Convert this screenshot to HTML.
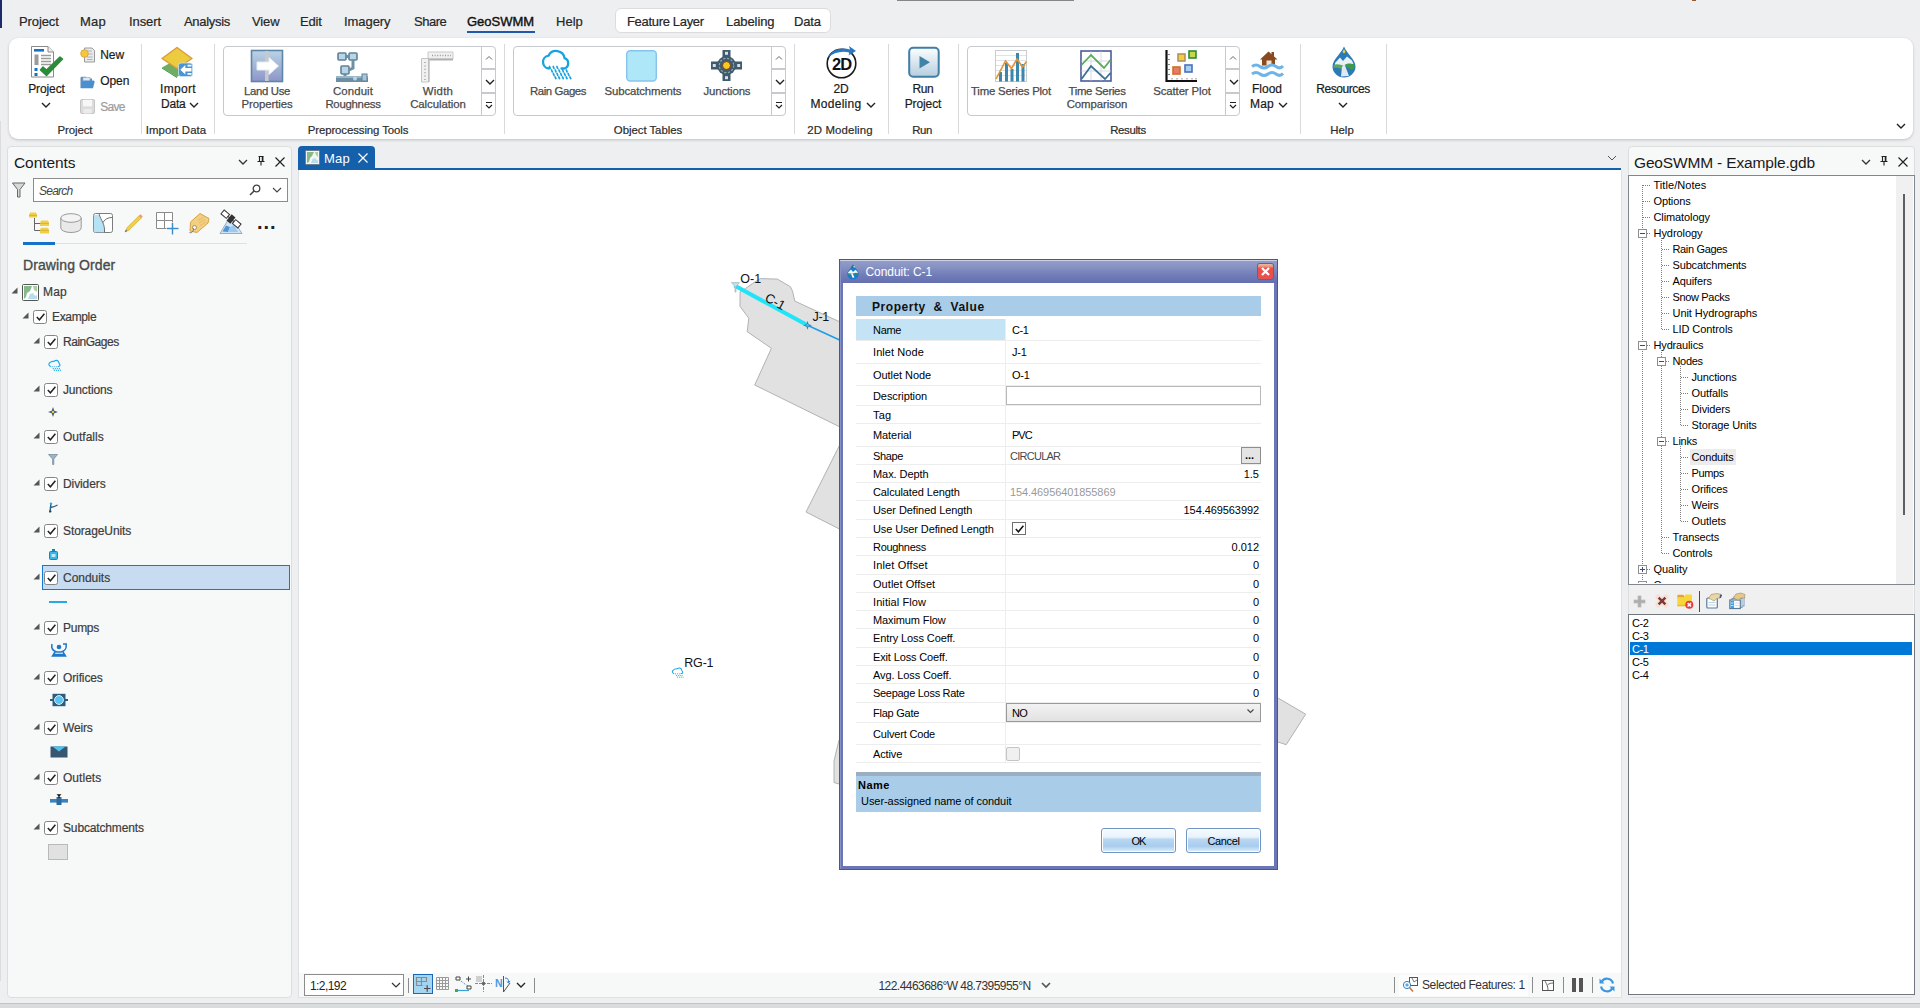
<!DOCTYPE html><html><head><meta charset="utf-8"><title>GeoSWMM</title><style>
*{box-sizing:border-box;margin:0;padding:0}
html,body{width:1920px;height:1008px;overflow:hidden;background:#eeeff1}
body{position:relative;font-family:"Liberation Sans",sans-serif;font-size:12px;color:#1a1a1a}
.a{position:absolute;white-space:nowrap}
.t{position:absolute;white-space:nowrap;line-height:1}
.c{transform:translateX(-50%);text-align:center}
.tab{color:#262626;-webkit-text-stroke:.2px}
.rb{color:#1a1a1a;-webkit-text-stroke:.2px}
.rg{color:#4a4a4a;-webkit-text-stroke:.25px}
.gl{color:#2b2b2b;-webkit-text-stroke:.2px}
.sep{position:absolute;width:1px;background:#d9d9d9;top:44px;height:90px}
.gal{position:absolute;border:1px solid #c6c9cd;border-radius:4px;background:#fff;top:46px;height:70px}
.tr{color:#3c3c3c;-webkit-text-stroke:.2px}
.tah{color:#000}
svg{position:absolute;overflow:visible}
</style></head><body>
<div class="a" style="left:0px;top:0px;width:2px;height:28px;background:#1f2a6b"></div>
<div class="a" style="left:0px;top:121px;width:1px;height:860px;background:#dcdcdc"></div>
<div class="a" style="left:1692px;top:0px;width:4px;height:1px;background:#9a5a30"></div>
<div class="a" style="left:0px;top:1003px;width:1920px;height:1px;background:#c2c3c5"></div>
<div class="a" style="left:0px;top:1004px;width:1920px;height:4px;background:#dadbdc"></div>
<div class="a" style="left:897px;top:0px;width:176.5px;height:1px;background:#868686"></div>
<div class="t tab" style="left:19px;top:14.5px;font-size:13px;letter-spacing:-0.1px;">Project</div>
<div class="t tab" style="left:80px;top:14.5px;font-size:13px;letter-spacing:0.21px;">Map</div>
<div class="t tab" style="left:129px;top:14.5px;font-size:13px;letter-spacing:-0.08px;">Insert</div>
<div class="t tab" style="left:184px;top:14.5px;font-size:13px;letter-spacing:-0.31px;">Analysis</div>
<div class="t tab" style="left:252px;top:14.5px;font-size:13px;letter-spacing:-0.13px;">View</div>
<div class="t tab" style="left:300px;top:14.5px;font-size:13px;letter-spacing:-0.15px;">Edit</div>
<div class="t tab" style="left:344px;top:14.5px;font-size:13px;letter-spacing:-0.06px;">Imagery</div>
<div class="t tab" style="left:414px;top:14.5px;font-size:13px;letter-spacing:-0.5px;">Share</div>
<div class="t tab" style="left:556px;top:14.5px;font-size:13px;letter-spacing:0.02px;">Help</div>
<div class="t tab" style="left:467px;top:14.5px;font-size:13px;color:#111;-webkit-text-stroke:.4px #111;letter-spacing:0px">GeoSWMM</div>
<div class="a" style="left:467px;top:31px;width:68px;height:2px;background:#1e5aa8"></div>
<div class="a" style="left:615px;top:8.4px;width:215.8px;height:25px;background:#fff;border:1px solid #dcdcdc;border-radius:6px"></div>
<div class="t tab" style="left:627px;top:14.5px;font-size:13px;letter-spacing:-0.32px;">Feature Layer</div>
<div class="t tab" style="left:726px;top:14.5px;font-size:13px;letter-spacing:-0.08px;">Labeling</div>
<div class="t tab" style="left:794px;top:14.5px;font-size:13px;letter-spacing:-0.18px;">Data</div>
<div class="a" style="left:8.6px;top:38.4px;width:1904.6px;height:100.8px;background:#fff;border-radius:9px;box-shadow:0 1px 3px rgba(0,0,0,.2)"></div>
<div class="sep" style="left:141px"></div>
<div class="sep" style="left:214px"></div>
<div class="sep" style="left:504px"></div>
<div class="sep" style="left:794px"></div>
<div class="sep" style="left:888px"></div>
<div class="sep" style="left:958px"></div>
<div class="sep" style="left:1300px"></div>
<div class="sep" style="left:1386px"></div>
<div class="t gl c" style="left:75px;top:124.5px;font-size:11.4px;letter-spacing:-0.08px;">Project</div>
<div class="t gl c" style="left:176px;top:124.5px;font-size:11.4px;letter-spacing:0.1px;">Import Data</div>
<div class="t gl c" style="left:358px;top:124.5px;font-size:11.4px;letter-spacing:-0.1px;">Preprocessing Tools</div>
<div class="t gl c" style="left:648px;top:124.5px;font-size:11.4px;letter-spacing:-0.04px;">Object Tables</div>
<div class="t gl c" style="left:840px;top:124.5px;font-size:11.4px;letter-spacing:0.14px;">2D Modeling</div>
<div class="t gl c" style="left:922px;top:124.5px;font-size:11.4px;letter-spacing:-0.39px;">Run</div>
<div class="t gl c" style="left:1128px;top:124.5px;font-size:11.4px;letter-spacing:-0.35px;">Results</div>
<div class="t gl c" style="left:1342px;top:124.5px;font-size:11.4px;letter-spacing:0.02px;">Help</div>
<div class="t rb c" style="left:46.5px;top:82.7px;font-size:12px;letter-spacing:-0.09px;">Project</div>
<svg style="left:41.5px;top:103px" width="8" height="5" viewBox="0 0 8 5"><path d="M0 0 L4 4 L8 0" fill="none" stroke="#222" stroke-width="1.4"/></svg>
<div class="t rb" style="left:100.2px;top:48.5px;font-size:12px;letter-spacing:-0.03px;">New</div>
<div class="t rb" style="left:100.2px;top:74.7px;font-size:12px;letter-spacing:-0.05px;">Open</div>
<div class="t rb" style="left:100.2px;top:100.5px;font-size:12px;letter-spacing:-0.71px;color:#9b9b9b">Save</div>
<div class="t rb c" style="left:178px;top:82.5px;font-size:12px;letter-spacing:0.31px;">Import</div>
<div class="t rb c" style="left:173.3px;top:97.5px;font-size:12px;letter-spacing:-0.17px;">Data</div>
<svg style="left:189.5px;top:103px" width="8" height="5" viewBox="0 0 8 5"><path d="M0 0 L4 4 L8 0" fill="none" stroke="#222" stroke-width="1.4"/></svg>
<div class="gal" style="left:223px;width:273px"></div>
<div class="a" style="left:481px;top:46px;width:1px;height:70px;background:#c6c9cd"></div>
<div class="a" style="left:481px;top:68px;width:15px;height:2px;background:#c6c9cd"></div>
<div class="a" style="left:481px;top:92px;width:15px;height:2px;background:#c6c9cd"></div>
<svg style="left:486px;top:56px" width="6" height="4" viewBox="0 0 6 4"><path d="M0 3.5 L3 .5 L6 3.5" fill="none" stroke="#666" stroke-width="1"/></svg>
<svg style="left:485.5px;top:79.5px" width="8" height="5" viewBox="0 0 8 5"><path d="M0 0 L4 4 L8 0" fill="none" stroke="#222" stroke-width="1.4"/></svg>
<svg style="left:486px;top:102px" width="6" height="7" viewBox="0 0 6 7"><path d="M0 .5 H6 M0 3 L3 6 L6 3" fill="none" stroke="#222" stroke-width="1.2"/></svg>
<div class="gal" style="left:513px;width:273px"></div>
<div class="a" style="left:771px;top:46px;width:1px;height:70px;background:#c6c9cd"></div>
<div class="a" style="left:771px;top:68px;width:15px;height:2px;background:#c6c9cd"></div>
<div class="a" style="left:771px;top:92px;width:15px;height:2px;background:#c6c9cd"></div>
<svg style="left:776px;top:56px" width="6" height="4" viewBox="0 0 6 4"><path d="M0 3.5 L3 .5 L6 3.5" fill="none" stroke="#666" stroke-width="1"/></svg>
<svg style="left:775.5px;top:79.5px" width="8" height="5" viewBox="0 0 8 5"><path d="M0 0 L4 4 L8 0" fill="none" stroke="#222" stroke-width="1.4"/></svg>
<svg style="left:776px;top:102px" width="6" height="7" viewBox="0 0 6 7"><path d="M0 .5 H6 M0 3 L3 6 L6 3" fill="none" stroke="#222" stroke-width="1.2"/></svg>
<div class="gal" style="left:967px;width:273px"></div>
<div class="a" style="left:1225px;top:46px;width:1px;height:70px;background:#c6c9cd"></div>
<div class="a" style="left:1225px;top:68px;width:15px;height:2px;background:#c6c9cd"></div>
<div class="a" style="left:1225px;top:92px;width:15px;height:2px;background:#c6c9cd"></div>
<svg style="left:1230px;top:56px" width="6" height="4" viewBox="0 0 6 4"><path d="M0 3.5 L3 .5 L6 3.5" fill="none" stroke="#666" stroke-width="1"/></svg>
<svg style="left:1229.5px;top:79.5px" width="8" height="5" viewBox="0 0 8 5"><path d="M0 0 L4 4 L8 0" fill="none" stroke="#222" stroke-width="1.4"/></svg>
<svg style="left:1230px;top:102px" width="6" height="7" viewBox="0 0 6 7"><path d="M0 .5 H6 M0 3 L3 6 L6 3" fill="none" stroke="#222" stroke-width="1.2"/></svg>
<div class="t rg c" style="left:267px;top:86.1px;font-size:11.4px;letter-spacing:-0.34px;">Land Use</div>
<div class="t rg c" style="left:267px;top:99.1px;font-size:11.4px;letter-spacing:-0.08px;">Properties</div>
<div class="t rg c" style="left:353px;top:86.1px;font-size:11.4px;letter-spacing:0.1px;">Conduit</div>
<div class="t rg c" style="left:353px;top:99.1px;font-size:11.4px;letter-spacing:-0.27px;">Roughness</div>
<div class="t rg c" style="left:438px;top:86.1px;font-size:11.4px;letter-spacing:0.26px;">Width</div>
<div class="t rg c" style="left:438px;top:99.1px;font-size:11.4px;letter-spacing:-0.06px;">Calculation</div>
<div class="t rg c" style="left:558px;top:86.1px;font-size:11.4px;letter-spacing:-0.41px;">Rain Gages</div>
<div class="t rg c" style="left:643px;top:86.1px;font-size:11.4px;letter-spacing:-0.13px;">Subcatchments</div>
<div class="t rg c" style="left:727px;top:86.1px;font-size:11.4px;letter-spacing:-0.14px;">Junctions</div>
<div class="t rg c" style="left:1011px;top:86.1px;font-size:11.4px;letter-spacing:-0.2px;">Time Series Plot</div>
<div class="t rg c" style="left:1097px;top:86.1px;font-size:11.4px;letter-spacing:-0.29px;">Time Series</div>
<div class="t rg c" style="left:1097px;top:99.1px;font-size:11.4px;letter-spacing:-0.07px;">Comparison</div>
<div class="t rg c" style="left:1182px;top:86.1px;font-size:11.4px;letter-spacing:-0.11px;">Scatter Plot</div>
<div class="t rb c" style="left:841px;top:82.5px;font-size:12px;letter-spacing:-0.23px;">2D</div>
<div class="t rb c" style="left:836px;top:97.5px;font-size:12px;letter-spacing:0.26px;">Modeling</div>
<svg style="left:866.5px;top:103px" width="8" height="5" viewBox="0 0 8 5"><path d="M0 0 L4 4 L8 0" fill="none" stroke="#222" stroke-width="1.4"/></svg>
<div class="t rb c" style="left:923px;top:82.5px;font-size:12px;letter-spacing:-0.42px;">Run</div>
<div class="t rb c" style="left:923px;top:97.5px;font-size:12px;letter-spacing:-0.09px;">Project</div>
<div class="t rb c" style="left:1267px;top:82.5px;font-size:12px;letter-spacing:-0.03px;">Flood</div>
<div class="t rb c" style="left:1262px;top:97.5px;font-size:12px;letter-spacing:0.2px;">Map</div>
<svg style="left:1278.5px;top:103px" width="8" height="5" viewBox="0 0 8 5"><path d="M0 0 L4 4 L8 0" fill="none" stroke="#222" stroke-width="1.4"/></svg>
<div class="t rb c" style="left:1343px;top:82.5px;font-size:12px;letter-spacing:-0.43px;">Resources</div>
<svg style="left:1338.5px;top:103px" width="8" height="5" viewBox="0 0 8 5"><path d="M0 0 L4 4 L8 0" fill="none" stroke="#222" stroke-width="1.4"/></svg>
<svg style="left:1896.5px;top:124px" width="8" height="5" viewBox="0 0 8 5"><path d="M0 0 L4 4 L8 0" fill="none" stroke="#222" stroke-width="1.4"/></svg>
<svg style="left:31px;top:46px" width="33" height="32" viewBox="0 0 33 32"><path d="M.5 .5 H17 L22.5 6 V31 H.5Z" fill="#fff" stroke="#8a8a8a" stroke-width="1"/><path d="M17 .5 V6 H22.5" fill="#eee" stroke="#8a8a8a" stroke-width="1"/><rect x="3" y="3" width="10" height="2.6" fill="#1473c8"/><rect x="3.5" y="8.5" width="4" height="10.5" fill="#9a9a9a"/><path d="M10 9.5 H20 M10 12.5 H20 M10 15.5 H20 M10 18.5 H20" stroke="#9a9a9a" stroke-width="1.4"/><rect x="3.5" y="22" width="3" height="3" fill="#1473c8"/><rect x="3.5" y="27" width="3" height="3" fill="#1473c8"/><path d="M9.5 24 L15.5 29.5 L31.5 13 L29 11 L15.5 24 L12 21Z" fill="#2d8a3a" stroke="#2d8a3a" stroke-width="1.5" stroke-linejoin="round"/></svg>
<svg style="left:80px;top:47px" width="15" height="16" viewBox="0 0 15 16"><path d="M4.5 1 H12 L14.5 3.5 V15 H4.5Z" fill="#e8eaec" stroke="#9a9a9a" stroke-width="1"/><path d="M7 4 H12 M7 7 H12.5 M7 10 H12.5 M7 12.5 H12.5" stroke="#a8b4c0" stroke-width="1"/><circle cx="4.5" cy="6.5" r="3.8" fill="#f2c93e" stroke="#e0a83a" stroke-width="1"/></svg>
<svg style="left:80px;top:76px" width="15" height="13" viewBox="0 0 15 13"><path d="M.5 2 Q.5 .8 1.8 .8 H6 L7.5 2.5 H12 V12 H.5Z" fill="#5b8ec4"/><rect x="3" y="1.5" width="7" height="6" fill="#e4e8ee" stroke="#9aa6b4" stroke-width=".6"/><path d="M.8 12.3 L2.5 5.5 Q2.8 4.5 4 4.5 H13.5 Q15 4.5 14.6 6 L13 12.3Z" fill="#4a90d0"/></svg>
<svg style="left:80px;top:99px" width="15" height="15" viewBox="0 0 15 15"><rect x=".5" y=".5" width="14" height="14" rx="1.5" fill="#dcdcdc" stroke="#c4c4c4"/><rect x="3" y=".8" width="9" height="6.5" fill="#f7f7f7"/><rect x="3.5" y="10" width="8" height="4.5" fill="#ececec"/></svg>
<svg style="left:161px;top:46px" width="33" height="32" viewBox="0 0 33 32"><path d="M1 21.5 L16 13 L30 21.5 L16 31Z" fill="#6fae62"/><path d="M1 21.5 L16 31 V32 L1 22.5Z" fill="#2f8a36"/><path d="M1 12.5 L16 1.5 L31 12.5 L16 22.5Z" fill="#eccb3f" stroke="#d99c3a" stroke-width="1.4" stroke-linejoin="round"/><rect x="17.5" y="17" width="14" height="13.5" rx="2.5" fill="#4a94d2" stroke="#cfe4f5" stroke-width=".8"/><path d="M19.3 23.8 L24.3 19 V22 H30.5 V25.6 H24.3 V28.6Z" fill="#fff"/><path d="M26.5 18.8 H30.5 V20.6 H26.5Z M26.5 27 H30.5 V28.8 H26.5Z" fill="#fff"/></svg>
<svg style="left:251px;top:50px" width="32" height="32" viewBox="0 0 32 32"><defs><linearGradient id="lu" x1="0" y1="0" x2="0" y2="1"><stop offset="0" stop-color="#b9d3e6"/><stop offset="1" stop-color="#8d95c9"/></linearGradient></defs><rect x=".5" y=".5" width="31" height="31" fill="url(#lu)" stroke="#5e86a6" stroke-width="1.6"/><rect x="14" y="1" width="3.6" height="30" fill="#c9c9c9"/><path d="M6 12 H18 V7.5 L27.5 16 L18 24.5 V20 H6Z" fill="#fff" stroke="#e4ecf3" stroke-width="1"/></svg>
<svg style="left:336px;top:51px" width="32" height="31" viewBox="0 0 32 31"><g fill="#b9d6e8" stroke="#5f8194" stroke-width="1.6"><rect x="2" y="2" width="8" height="7" rx="1"/><rect x="13" y="2" width="8" height="7" rx="1"/><rect x="5" y="15" width="8" height="8" rx="1"/></g><path d="M10 5.5 H13 M17 9 V17 L13 19 M9 23 V27" stroke="#6d90a4" stroke-width="3" fill="none"/><rect x="0" y="25" width="32" height="6" fill="#6d8fa3"/><rect x="0" y="25" width="32" height="2" fill="#9ab7c8"/><circle cx="19" cy="27.5" r="2" fill="#b9d6e8"/><rect x="26" y="23" width="5" height="7" fill="#a9c6d8" stroke="#5f8194"/></svg>
<svg style="left:421px;top:51px" width="32" height="31" viewBox="0 0 32 31"><path d="M7 1 H32 V8 H7Z" fill="#f1f1f1" stroke="#c9c9c9" stroke-width="1"/><path d="M.5 7.5 H7.5 V31 H.5Z" fill="#f1f1f1" stroke="#c4c4c4" stroke-width="1"/><path d="M7 8.5 H32" stroke="#b0b0b0" stroke-width="2"/><path d="M8 8 V31" stroke="#bdbdbd" stroke-width="1.4"/><path d="M11 4.5 H30" stroke="#999" stroke-width="1.4" stroke-dasharray="1 1.6"/><path d="M4 11 V29" stroke="#999" stroke-width="1.4" stroke-dasharray="1 2.4"/></svg>
<svg style="left:540px;top:52px" width="33" height="27" viewBox="0 0 33 27"><path d="M9 16.5 A6.5 6.5 0 0 1 8.5 3.6 A8.6 8.6 0 0 1 24.6 6.2 A5.4 5.4 0 0 1 24.2 16.5 H21.5" fill="none" stroke="#16a3e0" stroke-width="2.3" stroke-linecap="round"/><g stroke="#16a3e0" stroke-width="1.7" stroke-linecap="round"><path d="M9.5 14.5 L10.3 16.3 M13.2 14.5 L14 16.3 M16.9 14.5 L17.7 16.3 M11.5 18 L12.3 19.8 M15.2 18 L16 19.8 M18.9 18 L19.7 19.8 M22.6 18 L23.4 19.8 M26.3 18 L27.1 19.8 M13.3 21.5 L14.1 23.3 M17 21.5 L17.8 23.3 M20.7 21.5 L21.5 23.3 M24.4 21.5 L25.2 23.3 M28.1 21.5 L28.9 23.3 M15.1 25 L15.9 26.6 M18.8 25 L19.6 26.6 M22.5 25 L23.3 26.6 M26.2 25 L27 26.6 M29.9 25 L30.7 26.6"/></g></svg>
<svg style="left:626px;top:50px" width="31" height="32" viewBox="0 0 31 32"><rect x=".7" y=".7" width="29.6" height="30.3" rx="3.5" fill="#aee8f8" stroke="#86c4ec" stroke-width="1.4"/></svg>
<svg style="left:711px;top:50px" width="31" height="31" viewBox="0 0 31 31"><g fill="#3e5a6c"><rect x="11.5" y="0" width="8" height="31"/><rect x="0" y="11.5" width="31" height="8"/><circle cx="15.5" cy="15.5" r="9.5"/></g><circle cx="15.5" cy="15.5" r="7.2" fill="none" stroke="#8fa5b2" stroke-width="1.2" stroke-dasharray="2.2 1.6"/><g fill="#d6e0e6"><rect x="14" y="1.8" width="3" height="3"/><rect x="14" y="26.2" width="3" height="3"/><rect x="1.8" y="14" width="3" height="3"/><rect x="26.2" y="14" width="3" height="3"/></g><circle cx="15.5" cy="15.5" r="4" fill="#f6c824" stroke="#7a3a1a" stroke-width="1"/></svg>
<svg style="left:825px;top:45px" width="33" height="33" viewBox="0 0 33 33"><circle cx="16.5" cy="18.5" r="14.3" fill="#fff" stroke="#1a1a1a" stroke-width="1.6"/><path d="M2.5 13 C7 4 17 2 25 4.5 L24 1 L31 6 L23.5 10.5 L24.5 7.5 C17 5.5 9 7 2.5 13Z" fill="#2a78c2"/><text x="16.5" y="25" text-anchor="middle" font-family="Liberation Sans,sans-serif" font-weight="bold" font-size="16.5" letter-spacing="-1" fill="#111">2D</text></svg>
<svg style="left:908px;top:46px" width="32" height="32" viewBox="0 0 32 32"><defs><linearGradient id="rn" x1="0" y1="0" x2="0" y2="1"><stop offset="0" stop-color="#fdfeff"/><stop offset="1" stop-color="#b4cede"/></linearGradient></defs><rect x="1.2" y="1.8" width="29.5" height="29" rx="4" fill="url(#rn)" stroke="#3f7ea6" stroke-width="2"/><path d="M11.5 10 V22.5 L22 16.2Z" fill="#3f84a8"/></svg>
<svg style="left:995px;top:50px" width="32" height="32" viewBox="0 0 32 32"><rect x=".5" y=".5" width="31" height="31" fill="#fff" stroke="#c9cdd2"/><path d="M1 5.5 H31 M1 10.5 H31 M1 15.5 H31 M1 20.5 H31 M1 25.5 H31" stroke="#dfe3e8" stroke-width="1"/><g fill="#3b86ac"><rect x="4" y="22" width="3" height="9.5"/><rect x="10" y="13" width="3" height="18.5"/><rect x="15.5" y="19" width="3" height="12.5"/><rect x="21" y="3" width="3" height="28.5"/><rect x="26.5" y="14" width="3" height="17.5"/></g><path d="M1 29 L10.5 11 L16.5 18.5 L22 9 L27.5 17 L31.5 11.5" fill="none" stroke="#e39136" stroke-width="1.6"/></svg>
<svg style="left:1080px;top:50px" width="32" height="32" viewBox="0 0 32 32"><rect x="1" y="1" width="30" height="30" fill="#fff" stroke="#4a5a9a" stroke-width="1.6"/><path d="M11 1.5 V30.5 M21 1.5 V30.5 M1.5 11 H30.5 M1.5 21 H30.5" stroke="#d4dbe8" stroke-width="1"/><path d="M1.5 15 L11 5 L24 18 L30.5 10" fill="none" stroke="#5aaa58" stroke-width="1.8"/><path d="M1.5 29 L11 16 L25 29 L30.5 23" fill="none" stroke="#3c6e94" stroke-width="1.8"/></svg>
<svg style="left:1165px;top:50px" width="33" height="32" viewBox="0 0 33 32"><path d="M1.5 0 V31 H32" fill="none" stroke="#111" stroke-width="2.2"/><path d="M3 4.5 H5 M3 9.5 H5 M3 14.5 H5 M3 19.5 H5 M3 24.5 H5 M7 28 V29.5 M12 28 V29.5 M17 28 V29.5 M22 28 V29.5 M27 28 V29.5 M31 28 V29.5" stroke="#888" stroke-width="1"/><rect x="13" y="4" width="7" height="7" fill="#f2cf3c" stroke="#b08a58" stroke-width="1.5"/><rect x="24" y="1" width="7" height="7" fill="#c4d84a" stroke="#2f8a3a" stroke-width="1.6"/><rect x="8" y="17" width="7" height="7" fill="#e87a6a" stroke="#d0701e" stroke-width="1.6"/><rect x="20" y="15" width="7" height="7" fill="#a8d0f0" stroke="#4a70c0" stroke-width="1.6"/></svg>
<svg style="left:1252px;top:51px" width="31" height="27" viewBox="0 0 31 27"><path d="M8 8.5 L16.5 .5 L25.5 8.5 L23 8.5 V14.5 H10 V8.5Z" fill="#8a4a20"/><rect x="19.5" y="1" width="2.5" height="5" fill="#8a4a20"/><rect x="14.5" y="9.5" width="5" height="5" fill="#f2e4d0"/><g fill="none" stroke="#6fb4e8" stroke-width="3"><path d="M0 15.5 Q4 12.5 8 15.5 T16 15.5 T24 15.5 T31 15"/><path d="M0 23 Q4 20 8 23 T16 23 T24 23 T31 22.5"/></g></svg>
<svg style="left:1332px;top:46px" width="24" height="32" viewBox="0 0 24 32"><path d="M12 .5 C15 8 23.5 13.5 23.5 20.5 A11.5 11 0 0 1 .5 20.5 C.5 13.5 9 8 12 .5Z" fill="#2a7ab8"/><path d="M3 17 L8 11.5 L11 15 L15 10.5 L20 14.5 L21.5 18 L12 20 L3 19Z" fill="#e9f1f5"/><path d="M12.5 19 C17 16.5 21 17.5 23 19.5 C22.5 22.5 21.5 23 20 24 C17 22 14.5 21 12.5 19Z" fill="#3f9a4a"/><path d="M1.5 19 C5 17.5 9 18.5 11.5 20 L9.5 23 C6 21.5 3.5 21.5 1.5 22Z" fill="#5aa85a"/><path d="M10 20.5 L13 19.5 L17 30 L9 30.5Z" fill="#dfeaf0"/><path d="M10.5 6 L12 3 L13.5 6 L12 7.5Z" fill="#f2d23c"/></svg>
<div class="a" style="left:7px;top:146px;width:285px;height:852px;background:#f7f8f8;border:1px solid #dcdddd;border-radius:4px"></div>
<div class="t " style="left:14px;top:154.8px;font-size:15.5px;letter-spacing:-0.08px;color:#1a1a1a">Contents</div>
<svg style="left:238.5px;top:159.8px" width="8" height="5" viewBox="0 0 8 5"><path d="M0 0 L4 4 L8 0" fill="none" stroke="#333" stroke-width="1.3"/></svg>
<svg style="left:257px;top:155.8px" width="8" height="10" viewBox="0 0 8 10"><path d="M1.5 .5 H6.5 M2.5 .5 V5.5 M.5 5.5 H7.5 M4 5.5 V9.5" fill="none" stroke="#222" stroke-width="1.1"/><path d="M5.6 .5 V5.5" stroke="#222" stroke-width="1.7"/></svg>
<svg style="left:274.5px;top:156.8px" width="10" height="10" viewBox="0 0 10 10"><path d="M.5 .5 L9.5 9.5 M9.5 .5 L.5 9.5" fill="none" stroke="#222" stroke-width="1.2"/></svg>
<svg style="left:12px;top:182px" width="14" height="16" viewBox="0 0 14 16"><path d="M.5 1 H13 L8 7.5 V15 H5.5 V7.5 Z" fill="#d8d8d8" stroke="#666" stroke-width="1"/></svg>
<div class="a" style="left:33px;top:178px;width:255px;height:24px;background:#fff;border:1px solid #8c8c8c"></div>
<div class="t " style="left:39px;top:184.5px;font-size:12px;letter-spacing:-0.75px;font-style:italic;color:#444">Search</div>
<svg style="left:249px;top:184px" width="12" height="12" viewBox="0 0 12 12"><circle cx="7.5" cy="4.5" r="3.3" fill="none" stroke="#444" stroke-width="1.3"/><path d="M5 7 L1 11" stroke="#444" stroke-width="1.6"/></svg>
<svg style="left:273px;top:188px" width="8" height="5" viewBox="0 0 8 5"><path d="M0 0 L4 4 L8 0" fill="none" stroke="#444" stroke-width="1.1"/></svg>
<svg style="left:28px;top:212px" width="22" height="22" viewBox="0 0 22 22"><path d="M6.5 6 V18.5 H12 M6.5 11.5 H12" fill="none" stroke="#666" stroke-width="1"/><path d="M1 3 L2 .5 H8 L9 3 V5.5 H1Z M12 11 L13 8.5 H20 L21 11 V14 H12Z M12 18 L13 15.8 H20 L21 18 V21.5 H12Z" fill="#f0cf4c"/><path d="M1 3.4 H9 M12 11.4 H21 M12 18.4 H21" stroke="#d9b32e" stroke-width="1"/></svg>
<svg style="left:60px;top:213px" width="22" height="20" viewBox="0 0 22 20"><path d="M.8 5 V15 A10.2 4.5 0 0 0 21.2 15 V5" fill="#e9e9e9" stroke="#9a9a9a" stroke-width="1"/><ellipse cx="11" cy="5" rx="10.2" ry="4.3" fill="#f4f4f4" stroke="#9a9a9a" stroke-width="1"/></svg>
<svg style="left:93px;top:213px" width="20" height="20" viewBox="0 0 20 20"><rect x=".5" y=".5" width="19" height="19" rx="2" fill="#fff" stroke="#7c7c7c"/><path d="M.8 2 H6 C8 8 12 10 11.5 19.2 H2.5 Q.8 19.2 .8 17Z" fill="#b5e3f5"/><path d="M6 .8 C8 8 12 10 11.5 19.2 M10 9.5 C12 6 15 4.5 19 4.5" fill="none" stroke="#6f6f6f" stroke-width="1"/></svg>
<svg style="left:124px;top:213px" width="20" height="20" viewBox="0 0 20 20"><path d="M1 19 L3.2 14.5 L15 2.8 L17.3 5 L5.5 16.8Z" fill="#f0cf4c" stroke="#d1ab28" stroke-width=".7"/><path d="M15 2.8 L16.4 1.3 L18.7 3.6 L17.3 5Z" fill="#e9967a"/><path d="M1 19 L2 16.8 L3.2 18Z" fill="#555"/></svg>
<svg style="left:156px;top:212px" width="23" height="23" viewBox="0 0 23 23"><path d="M.5 .5 H16.5 V16.5 H.5Z M8.5 .5 V16.5 M.5 8.5 H16.5" fill="#fff" stroke="#8a8a8a" stroke-width="1"/><path d="M10.5 16.5 H22.5 M16.5 10.5 V22.5" stroke="#fff" stroke-width="3.5"/><path d="M11 16.5 H22.5 M16.5 11 V22.5" stroke="#3a8dc9" stroke-width="1.5"/></svg>
<svg style="left:188px;top:212px" width="23" height="23" viewBox="0 0 23 23"><path d="M2.5 10 L12 1.5 L21 6.5 L20 11 L9 20.5 L2 19Z" fill="#f3cf82" stroke="#d6a347" stroke-width="1"/><circle cx="6.5" cy="15.5" r="2" fill="#fff" stroke="#9a7b3a" stroke-width=".8"/><path d="M10 8.5 L16 5 M11 11 L17 7.5 M12 13.5 L18 10" stroke="#dcb35e" stroke-width=".7"/><path d="M5.5 16.5 C5.5 20 3 21.5 1.5 20.5" fill="none" stroke="#666" stroke-width=".9"/></svg>
<svg style="left:219px;top:211px" width="24" height="24" viewBox="0 0 24 24"><path d="M1 22.5 L9 9 L16 12 L23 22.5Z" fill="#cfe5f7" stroke="#8a9aa8" stroke-width=".8"/><path d="M3.5 20.5 L7 14.5 L11 16 L9 21Z" fill="#4d95d8"/><path d="M11 16 L15 14 L19 21 L9 21Z" fill="#9ccaee"/><g transform="rotate(40 12 8)"><rect x="1" y="5.5" width="7" height="5" fill="#fff" stroke="#333" stroke-width="1"/><rect x="16" y="5.5" width="7" height="5" fill="#fff" stroke="#333" stroke-width="1"/><rect x="9.5" y="4" width="5" height="8" fill="#333"/><path d="M8 8 H16" stroke="#333" stroke-width="1"/></g></svg>
<div class="t " style="left:257px;top:212.0px;font-size:20px;font-weight:bold;color:#222;letter-spacing:1px">...</div>
<div class="a" style="left:55px;top:243px;width:192px;height:1px;background:#dfdfdf"></div>
<div class="a" style="left:23px;top:241.5px;width:32px;height:3px;background:#1473c8"></div>
<div class="t " style="left:23px;top:258.0px;font-size:14px;color:#4a4a4a;-webkit-text-stroke:.35px #4a4a4a;letter-spacing:.1px">Drawing Order</div>
<svg style="left:10.5px;top:287px" width="7" height="7" viewBox="0 0 7 7"><path d="M6.5 .5 V6.5 H.5Z" fill="#555"/></svg>
<svg style="left:22px;top:284px" width="17" height="17" viewBox="0 0 17 17"><rect x=".5" y=".5" width="16" height="16" rx="1" fill="#fdfdfd" stroke="#555"/><path d="M2 2 H10 L8 7 L5 9 L4 13 L2 15Z" fill="#86b98a"/><path d="M11 2 H15 V8 L12 6Z" fill="#a8d0a0"/><path d="M6 15 L8 10 L11 9 L13 12 L15 11 V15Z" fill="#b9dcec"/></svg>
<div class="t tr" style="left:43px;top:286.0px;font-size:12px;letter-spacing:0.2px;">Map</div>
<svg style="left:21.5px;top:312px" width="7" height="7" viewBox="0 0 7 7"><path d="M6.5 .5 V6.5 H.5Z" fill="#555"/></svg>
<div class="a" style="left:33px;top:310px;width:14px;height:14px;background:#fff;border:1px solid #858585;border-radius:2.5px"></div>
<svg style="left:35.5px;top:313px" width="9" height="8" viewBox="0 0 9 8"><path d="M.8 4 L3.4 6.8 L8.4 .8" fill="none" stroke="#222" stroke-width="1.5"/></svg>
<div class="t tr" style="left:52px;top:311.0px;font-size:12px;letter-spacing:-0.35px;">Example</div>
<div class="a" style="left:42px;top:565px;width:248px;height:25px;background:#c7dcf0;border:1px solid #1379d4"></div>
<svg style="left:32.5px;top:337px" width="7" height="7" viewBox="0 0 7 7"><path d="M6.5 .5 V6.5 H.5Z" fill="#555"/></svg>
<div class="a" style="left:44px;top:335px;width:14px;height:14px;background:#fff;border:1px solid #858585;border-radius:2.5px"></div>
<svg style="left:46.5px;top:338px" width="9" height="8" viewBox="0 0 9 8"><path d="M.8 4 L3.4 6.8 L8.4 .8" fill="none" stroke="#222" stroke-width="1.5"/></svg>
<div class="t tr" style="left:63px;top:336.0px;font-size:12px;letter-spacing:-0.48px;">RainGages</div>
<svg style="left:32.5px;top:385px" width="7" height="7" viewBox="0 0 7 7"><path d="M6.5 .5 V6.5 H.5Z" fill="#555"/></svg>
<div class="a" style="left:44px;top:383px;width:14px;height:14px;background:#fff;border:1px solid #858585;border-radius:2.5px"></div>
<svg style="left:46.5px;top:386px" width="9" height="8" viewBox="0 0 9 8"><path d="M.8 4 L3.4 6.8 L8.4 .8" fill="none" stroke="#222" stroke-width="1.5"/></svg>
<div class="t tr" style="left:63px;top:384.0px;font-size:12px;letter-spacing:-0.16px;">Junctions</div>
<svg style="left:32.5px;top:432px" width="7" height="7" viewBox="0 0 7 7"><path d="M6.5 .5 V6.5 H.5Z" fill="#555"/></svg>
<div class="a" style="left:44px;top:430px;width:14px;height:14px;background:#fff;border:1px solid #858585;border-radius:2.5px"></div>
<svg style="left:46.5px;top:433px" width="9" height="8" viewBox="0 0 9 8"><path d="M.8 4 L3.4 6.8 L8.4 .8" fill="none" stroke="#222" stroke-width="1.5"/></svg>
<div class="t tr" style="left:63px;top:431.0px;font-size:12px;">Outfalls</div>
<svg style="left:32.5px;top:479px" width="7" height="7" viewBox="0 0 7 7"><path d="M6.5 .5 V6.5 H.5Z" fill="#555"/></svg>
<div class="a" style="left:44px;top:477px;width:14px;height:14px;background:#fff;border:1px solid #858585;border-radius:2.5px"></div>
<svg style="left:46.5px;top:480px" width="9" height="8" viewBox="0 0 9 8"><path d="M.8 4 L3.4 6.8 L8.4 .8" fill="none" stroke="#222" stroke-width="1.5"/></svg>
<div class="t tr" style="left:63px;top:478.0px;font-size:12px;letter-spacing:-0.1px;">Dividers</div>
<svg style="left:32.5px;top:526px" width="7" height="7" viewBox="0 0 7 7"><path d="M6.5 .5 V6.5 H.5Z" fill="#555"/></svg>
<div class="a" style="left:44px;top:524px;width:14px;height:14px;background:#fff;border:1px solid #858585;border-radius:2.5px"></div>
<svg style="left:46.5px;top:527px" width="9" height="8" viewBox="0 0 9 8"><path d="M.8 4 L3.4 6.8 L8.4 .8" fill="none" stroke="#222" stroke-width="1.5"/></svg>
<div class="t tr" style="left:63px;top:525.0px;font-size:12px;letter-spacing:-0.1px;">StorageUnits</div>
<svg style="left:32.5px;top:573px" width="7" height="7" viewBox="0 0 7 7"><path d="M6.5 .5 V6.5 H.5Z" fill="#555"/></svg>
<div class="a" style="left:44px;top:571px;width:14px;height:14px;background:#fff;border:1px solid #858585;border-radius:2.5px"></div>
<svg style="left:46.5px;top:574px" width="9" height="8" viewBox="0 0 9 8"><path d="M.8 4 L3.4 6.8 L8.4 .8" fill="none" stroke="#222" stroke-width="1.5"/></svg>
<div class="t tr" style="left:63px;top:572.0px;font-size:12px;letter-spacing:-0.03px;">Conduits</div>
<svg style="left:32.5px;top:623px" width="7" height="7" viewBox="0 0 7 7"><path d="M6.5 .5 V6.5 H.5Z" fill="#555"/></svg>
<div class="a" style="left:44px;top:621px;width:14px;height:14px;background:#fff;border:1px solid #858585;border-radius:2.5px"></div>
<svg style="left:46.5px;top:624px" width="9" height="8" viewBox="0 0 9 8"><path d="M.8 4 L3.4 6.8 L8.4 .8" fill="none" stroke="#222" stroke-width="1.5"/></svg>
<div class="t tr" style="left:63px;top:622.0px;font-size:12px;letter-spacing:-0.27px;">Pumps</div>
<svg style="left:32.5px;top:673px" width="7" height="7" viewBox="0 0 7 7"><path d="M6.5 .5 V6.5 H.5Z" fill="#555"/></svg>
<div class="a" style="left:44px;top:671px;width:14px;height:14px;background:#fff;border:1px solid #858585;border-radius:2.5px"></div>
<svg style="left:46.5px;top:674px" width="9" height="8" viewBox="0 0 9 8"><path d="M.8 4 L3.4 6.8 L8.4 .8" fill="none" stroke="#222" stroke-width="1.5"/></svg>
<div class="t tr" style="left:63px;top:672.0px;font-size:12px;letter-spacing:-0.12px;">Orifices</div>
<svg style="left:32.5px;top:723px" width="7" height="7" viewBox="0 0 7 7"><path d="M6.5 .5 V6.5 H.5Z" fill="#555"/></svg>
<div class="a" style="left:44px;top:721px;width:14px;height:14px;background:#fff;border:1px solid #858585;border-radius:2.5px"></div>
<svg style="left:46.5px;top:724px" width="9" height="8" viewBox="0 0 9 8"><path d="M.8 4 L3.4 6.8 L8.4 .8" fill="none" stroke="#222" stroke-width="1.5"/></svg>
<div class="t tr" style="left:63px;top:722.0px;font-size:12px;letter-spacing:-0.16px;">Weirs</div>
<svg style="left:32.5px;top:773px" width="7" height="7" viewBox="0 0 7 7"><path d="M6.5 .5 V6.5 H.5Z" fill="#555"/></svg>
<div class="a" style="left:44px;top:771px;width:14px;height:14px;background:#fff;border:1px solid #858585;border-radius:2.5px"></div>
<svg style="left:46.5px;top:774px" width="9" height="8" viewBox="0 0 9 8"><path d="M.8 4 L3.4 6.8 L8.4 .8" fill="none" stroke="#222" stroke-width="1.5"/></svg>
<div class="t tr" style="left:63px;top:772.0px;font-size:12px;letter-spacing:0.03px;">Outlets</div>
<svg style="left:32.5px;top:823px" width="7" height="7" viewBox="0 0 7 7"><path d="M6.5 .5 V6.5 H.5Z" fill="#555"/></svg>
<div class="a" style="left:44px;top:821px;width:14px;height:14px;background:#fff;border:1px solid #858585;border-radius:2.5px"></div>
<svg style="left:46.5px;top:824px" width="9" height="8" viewBox="0 0 9 8"><path d="M.8 4 L3.4 6.8 L8.4 .8" fill="none" stroke="#222" stroke-width="1.5"/></svg>
<div class="t tr" style="left:63px;top:822.0px;font-size:12px;letter-spacing:-0.15px;">Subcatchments</div>
<svg style="left:48.2px;top:359.8px" width="13" height="11" viewBox="0 0 13 11"><g transform="scale(1.08)"><path d="M2.2 6 Q-.2 4.4 1.4 2.7 Q3.3 .9 5.4 1.3 Q8 -.5 9.6 1.3 Q10.2 3.3 11 4.3 Q11.4 5.8 9.4 6" fill="none" stroke="#1aa7e6" stroke-width="1.05" stroke-linecap="round"/><path d="M3.4 6.3 H9 M4.4 8 H11 M5.4 9.6 H12" stroke="#2bb0ea" stroke-width="1" stroke-dasharray="1 .9"/></g></svg>
<svg style="left:48px;top:407px" width="10" height="10" viewBox="0 0 10 10"><path d="M5 0 L6.3 3.7 L10 5 L6.3 6.3 L5 10 L3.7 6.3 L0 5 L3.7 3.7Z" fill="#3d5a73"/><circle cx="5" cy="5" r="1.3" fill="#f2c233"/></svg>
<svg style="left:48px;top:454px" width="10" height="11" viewBox="0 0 10 11"><path d="M.5 .5 H9.5 L5.8 5 V10.5 H4.6 V5Z" fill="#9eb3c4" stroke="#6d8598" stroke-width=".7"/></svg>
<svg style="left:48px;top:502px" width="10" height="11" viewBox="0 0 10 11"><path d="M3 1 L2 10 M2.6 5.5 C5 5 7 4.5 9.5 3" fill="none" stroke="#2f5f85" stroke-width="1.4"/><circle cx="3" cy="1.6" r="1.2" fill="#29a9e0"/><circle cx="2.2" cy="9.4" r="1.2" fill="#244a6a"/></svg>
<svg style="left:49px;top:549px" width="9" height="11" viewBox="0 0 9 11"><rect x=".5" y="2.5" width="8" height="8" rx="1" fill="#3bb5e6" stroke="#1d83b5"/><rect x="3" y="0" width="3" height="3" fill="#1d83b5"/><rect x="2.5" y="5" width="4" height="3" fill="#bfe8f8"/></svg>
<div class="a" style="left:49px;top:601px;width:18px;height:2px;background:#2aa7e8"></div>
<svg style="left:50px;top:643px" width="18" height="14" viewBox="0 0 18 14"><path d="M2 1 C1 5 3 8 7 9 H11 C15 8 17 5 16 1 M13 1 H17 M5 9 L2.5 13 H15.5 L13 9 M3.5 11.5 H14.5" fill="none" stroke="#1f78c8" stroke-width="1.5"/><circle cx="9" cy="4" r="2.3" fill="#1f78c8"/></svg>
<svg style="left:50px;top:693px" width="18" height="14" viewBox="0 0 18 14"><rect x="2.5" y=".8" width="13" height="12.4" fill="#2f5b7c"/><path d="M0 7 H18" stroke="#2f5b7c" stroke-width="2"/><circle cx="9" cy="7" r="4.4" fill="#5cc3f0" stroke="#d7f0fb" stroke-width="1"/></svg>
<svg style="left:50px;top:746px" width="18" height="12" viewBox="0 0 18 12"><rect x=".5" y=".5" width="17" height="11" fill="#37566f"/><path d="M2.5 .5 H15.5 L9 5.5Z" fill="#4cc2f2"/></svg>
<svg style="left:50px;top:794px" width="18" height="12" viewBox="0 0 18 12"><rect x="0" y="5" width="18" height="3.6" fill="#3b83bd"/><rect x="6.5" y="3" width="5" height="8" fill="#2d6aa0"/><path d="M6.5 .3 H11.5 L9 2.8Z" fill="#111"/><rect x="8.5" y="2" width="1" height="2" fill="#111"/></svg>
<div class="a" style="left:48px;top:844px;width:20px;height:16px;background:#e1e1e1;border:1px solid #b9b9b9"></div>
<div class="a" style="left:298px;top:170px;width:1323px;height:827.5px;background:#f7f8f8"></div>
<div class="a" style="left:298px;top:170px;width:1323px;height:803px;background:#fff"></div>
<div class="a" style="left:298px;top:168px;width:1323px;height:2px;background:#1460aa"></div>
<div class="a" style="left:298px;top:146px;width:76.5px;height:23px;background:#1460aa;border-radius:4px 4px 0 0"></div>
<svg style="left:305px;top:150px" width="15" height="15" viewBox="0 0 15 15"><rect x=".5" y=".5" width="14" height="14" rx="1" fill="#f4f6f4" stroke="#6d7d8d"/><path d="M2 2 H9 L7 6 L5 8 L4 12 L2 13Z" fill="#86b98a"/><path d="M10 2 H13 V7 L11 5Z" fill="#a8d0a0"/><path d="M6 13 L7.5 9 L10 8 L12 10.5 L13 10 V13Z" fill="#b9dcec"/></svg>
<div class="t " style="left:324px;top:152.0px;font-size:13px;letter-spacing:0.21px;color:#fff">Map</div>
<svg style="left:358px;top:153px" width="10" height="10" viewBox="0 0 10 10"><path d="M.5 .5 L9.5 9.5 M9.5 .5 L.5 9.5" fill="none" stroke="#fff" stroke-width="1.2"/></svg>
<svg style="left:1607.5px;top:155.8px" width="8" height="5" viewBox="0 0 8 5"><path d="M0 0 L4 4 L8 0" fill="none" stroke="#555" stroke-width="1"/></svg>
<div class="a" style="left:1621px;top:170px;width:1px;height:827.5px;background:#dfe0e1"></div>
<div class="a" style="left:297.5px;top:170px;width:1px;height:827.5px;background:#dfe0e1"></div>
<div class="a" style="left:298px;top:997px;width:1324px;height:1px;background:#dfe0e1"></div>
<svg style="left:298px;top:170px" width="1323" height="800" viewBox="0 0 1323 800"><g transform="translate(-298,-170)"><polygon points="740,292 745.6,288.4 752.4,283.6 760.3,278.6 777.4,279.1 790.5,286.8 792.5,291.2 794.8,301.1 839.4,321.7 900,350 900,456 839.4,426.7 754.7,385 771.4,348.3 747.2,331.7 748.8,318.2 740,306.3" fill="#e1e1e1" stroke="#b2b2b2" stroke-width="1"/><polygon points="839.4,445.6 900,330 900,560 839.4,529 806,512" fill="#e1e1e1" stroke="#b2b2b2" stroke-width="1"/><polygon points="900,700 839,740 834,761 834,782.5 839,784 900,800" fill="#e1e1e1" stroke="#b2b2b2" stroke-width="1"/><polygon points="1200,660 1278.5,698.3 1305.7,714.2 1286.2,744.7 1277.4,741.8 1200,720" fill="#e1e1e1" stroke="#b2b2b2" stroke-width="1"/><path d="M807.5 325.3 L845 342.6" stroke="#1e9de8" stroke-width="1.6"/><path d="M734.5 285.6 L807.5 325.3" stroke="#21e4f8" stroke-width="4"/><path d="M731.5 282.6 H739.5 L736 286.6 V292 H735 V286.6Z" fill="#cfdbe4" stroke="#9db0c0" stroke-width=".7"/><path d="M807.5 320.8 L808.6 324.2 L812 325.3 L808.6 326.4 L807.5 329.8 L806.4 326.4 L803 325.3 L806.4 324.2Z" fill="#3f7fae"/><circle cx="807.5" cy="325.3" r="1.2" fill="#35c8f5"/><g transform="translate(671.6,667.6)"><path d="M2.2 6 Q-.2 4.4 1.4 2.7 Q3.3 .9 5.4 1.3 Q8 -.5 9.6 1.3 Q10.2 3.3 11 4.3 Q11.4 5.8 9.4 6" fill="none" stroke="#1aa7e6" stroke-width="1.05" stroke-linecap="round"/><path d="M3.4 6.3 H9 M4.4 8 H11 M5.4 9.6 H12" stroke="#2bb0ea" stroke-width="1" stroke-dasharray="1 .9"/></g></g></svg>
<div class="t " style="left:740.3px;top:272.8px;font-size:12.5px;color:#111;letter-spacing:0px">O-1</div>
<div class="t " style="left:812.5px;top:310.8px;font-size:12.5px;color:#111;letter-spacing:-.3px">J-1</div>
<div class="t " style="left:684.3px;top:656.5px;font-size:12.5px;color:#111;letter-spacing:-.2px">RG-1</div>
<div class="t" style="left:766px;top:289.5px;font-size:13px;color:#111;transform:rotate(28deg);transform-origin:0 50%">C-1</div>
<div class="a" style="left:304px;top:974px;width:100px;height:22px;background:#fff;border:1px solid #8c8c8c"></div>
<div class="t " style="left:310px;top:979.5px;font-size:12px;letter-spacing:-0.57px;color:#222">1:2,192</div>
<svg style="left:392px;top:983px" width="8" height="5" viewBox="0 0 8 5"><path d="M0 0 L4 4 L8 0" fill="none" stroke="#333" stroke-width="1.2"/></svg>
<div class="a" style="left:408px;top:978px;width:1px;height:15px;background:#8c8c8c"></div>
<div class="a" style="left:413px;top:974px;width:20px;height:20px;background:#a4d6f4;border:1.5px solid #1c68b8"></div>
<svg style="left:415.5px;top:976.5px" width="15" height="15" viewBox="0 0 15 15"><path d="M.5 .5 H10.5 V8.5 H.5Z M5.5 .5 V8.5 M.5 4.5 H10.5" fill="none" stroke="#8a8a8a" stroke-width="1.2"/><path d="M6.5 5 H11 V8.8 H6.5Z" fill="#a4d6f4"/><path d="M8 11.5 H14.5 M11.2 8.2 V14.8" stroke="#4a4a4a" stroke-width="1.2"/></svg>
<svg style="left:436px;top:977px" width="13" height="13" viewBox="0 0 13 13"><path d="M.5 .5 H12.5 V12.5 H.5Z M3.5 .5 V12.5 M6.5 .5 V12.5 M9.5 .5 V12.5 M.5 3.5 H12.5 M.5 6.5 H12.5 M.5 9.5 H12.5" fill="none" stroke="#9a9a9a" stroke-width="1"/></svg>
<svg style="left:455px;top:976px" width="17" height="16" viewBox="0 0 17 16"><path d="M3 3 L14 11" stroke="#3aa0d8" stroke-width="1" stroke-dasharray="2 1.5"/><path d="M1 1 H5 V4 H1Z M12 10 H16 V13 H12Z" fill="#fff" stroke="#444" stroke-width="1"/><path d="M11 3 H16 M13.5 .5 V5.5" stroke="#444" stroke-width="1"/><path d="M1 14.5 H14" stroke="#3aa0d8" stroke-width="1.2"/><rect x="0" y="13" width="3" height="3" fill="#5aa040"/></svg>
<svg style="left:475px;top:975px" width="17" height="18" viewBox="0 0 17 18"><rect x="1" y="1" width="6" height="6" fill="#d0d0d0"/><path d="M8.5 0 V17 M0 8.5 H17" stroke="#8a8a8a" stroke-width="1" stroke-dasharray="3 1"/><circle cx="8.5" cy="8.5" r="1.8" fill="#666"/></svg>
<div class="t " style="left:495px;top:978.2px;font-size:10.5px;color:#4a9ae0;font-weight:bold">N</div>
<svg style="left:502px;top:976px" width="9" height="17" viewBox="0 0 9 17"><path d="M1.5 0 V16 L8 7" fill="none" stroke="#555" stroke-width="1"/><path d="M3 2 C6 2 7 4 6.5 6.5 M4.8 5.5 L6.5 7 L8 5" fill="none" stroke="#2f7fca" stroke-width="1"/></svg>
<svg style="left:517px;top:983px" width="8" height="5" viewBox="0 0 8 5"><path d="M0 0 L4 4 L8 0" fill="none" stroke="#222" stroke-width="1.3"/></svg>
<div class="a" style="left:534px;top:978px;width:1px;height:15px;background:#8c8c8c"></div>
<div class="t " style="left:878.5px;top:979.5px;font-size:12px;color:#333;letter-spacing:-.55px">122.4463686°W 48.7395955°N</div>
<svg style="left:1042px;top:983px" width="8" height="5" viewBox="0 0 8 5"><path d="M0 0 L4 4 L8 0" fill="none" stroke="#555" stroke-width="1.7"/></svg>
<div class="a" style="left:1394px;top:977px;width:1px;height:16px;background:#8c8c8c"></div>
<div class="a" style="left:1399px;top:975px;width:129px;height:21px;background:#fdfdfd"></div>
<svg style="left:1402px;top:977px" width="16" height="16" viewBox="0 0 16 16"><rect x="7.5" y=".5" width="8" height="8" fill="#fff" stroke="#555"/><path d="M10 1 L12 5 L15 3" fill="none" stroke="#555" stroke-width=".8"/><circle cx="5" cy="8" r="3.6" fill="#fff" stroke="#2f7fca" stroke-width="1"/><path d="M3.2 8 H6.8 M5 6.2 V9.8" stroke="#2f7fca" stroke-width=".9"/><path d="M7.5 10.5 L11 14.5" stroke="#c87a3a" stroke-width="1.6"/></svg>
<div class="t " style="left:1422px;top:979.0px;font-size:12px;letter-spacing:-0.4px;color:#333">Selected Features: 1</div>
<div class="a" style="left:1532px;top:977px;width:1px;height:16px;background:#8c8c8c"></div>
<svg style="left:1542px;top:980px" width="12" height="11" viewBox="0 0 12 11"><rect x=".5" y=".5" width="11" height="10" fill="#fff" stroke="#555"/><path d="M3 .5 C4 4 6 5 6 10.5 M5.5 5 C7 3.5 9 3 11.5 3" fill="none" stroke="#555" stroke-width=".9"/></svg>
<div class="a" style="left:1563px;top:977px;width:1px;height:16px;background:#8c8c8c"></div>
<div class="a" style="left:1572px;top:978px;width:4px;height:14px;background:#555"></div>
<div class="a" style="left:1579px;top:978px;width:4px;height:14px;background:#555"></div>
<div class="a" style="left:1592px;top:977px;width:1px;height:16px;background:#8c8c8c"></div>
<svg style="left:1599px;top:977px" width="16" height="16" viewBox="0 0 16 16"><path d="M14 6.5 A6.2 6.2 0 0 0 2.5 5 M2 9.5 A6.2 6.2 0 0 0 13.5 11" fill="none" stroke="#3d96e0" stroke-width="2.2"/><path d="M.5 1.5 V6.5 H5.5Z M15.5 14.5 V9.5 H10.5Z" fill="#3d96e0"/></svg>
<div class="a" style="left:1627.5px;top:146px;width:287px;height:852px;background:#f7f8f8;border:1px solid #dcdddd;border-radius:4px"></div>
<div class="t " style="left:1634px;top:154.6px;font-size:15.5px;letter-spacing:-0.16px;color:#1a1a1a">GeoSWMM - Example.gdb</div>
<svg style="left:1861.5px;top:159.8px" width="8" height="5" viewBox="0 0 8 5"><path d="M0 0 L4 4 L8 0" fill="none" stroke="#333" stroke-width="1.3"/></svg>
<svg style="left:1879.5px;top:156px" width="8" height="10" viewBox="0 0 8 10"><path d="M1.5 .5 H6.5 M2.5 .5 V5.5 M.5 5.5 H7.5 M4 5.5 V9.5" fill="none" stroke="#222" stroke-width="1.1"/><path d="M5.6 .5 V5.5" stroke="#222" stroke-width="1.7"/></svg>
<svg style="left:1897.5px;top:156.8px" width="10" height="10" viewBox="0 0 10 10"><path d="M.5 .5 L9.5 9.5 M9.5 .5 L.5 9.5" fill="none" stroke="#222" stroke-width="1.2"/></svg>
<div class="a" style="left:1628px;top:175px;width:286.5px;height:410px;background:#fff;border:1px solid #7f8791"></div>
<div class="a" style="left:1896px;top:176px;width:17px;height:408px;background:#f0f0f0"></div>
<div class="a" style="left:1903px;top:194px;width:2px;height:321px;background:#5f5f5f"></div>
<div class="a" style="left:1690px;top:449px;width:46px;height:16px;background:#ececec"></div>
<div class="t tah" style="left:1653.5px;top:179.8px;font-size:11px;letter-spacing:0.06px;">Title/Notes</div>
<div class="t tah" style="left:1653.5px;top:195.8px;font-size:11px;letter-spacing:-0.12px;">Options</div>
<div class="t tah" style="left:1653.5px;top:211.8px;font-size:11px;letter-spacing:-0.1px;">Climatology</div>
<div class="t tah" style="left:1653.5px;top:227.8px;font-size:11px;letter-spacing:-0.06px;">Hydrology</div>
<div class="t tah" style="left:1672.5px;top:243.8px;font-size:11px;letter-spacing:-0.35px;">Rain Gages</div>
<div class="t tah" style="left:1672.5px;top:259.8px;font-size:11px;letter-spacing:-0.15px;">Subcatchments</div>
<div class="t tah" style="left:1672.5px;top:275.8px;font-size:11px;letter-spacing:-0.11px;">Aquifers</div>
<div class="t tah" style="left:1672.5px;top:291.8px;font-size:11px;letter-spacing:-0.34px;">Snow Packs</div>
<div class="t tah" style="left:1672.5px;top:307.8px;font-size:11px;letter-spacing:-0.05px;">Unit Hydrographs</div>
<div class="t tah" style="left:1672.5px;top:323.8px;font-size:11px;letter-spacing:-0.08px;">LID Controls</div>
<div class="t tah" style="left:1653.5px;top:339.8px;font-size:11px;letter-spacing:-0.15px;">Hydraulics</div>
<div class="t tah" style="left:1672.5px;top:355.8px;font-size:11px;letter-spacing:-0.34px;">Nodes</div>
<div class="t tah" style="left:1691.5px;top:371.8px;font-size:11px;letter-spacing:-0.15px;">Junctions</div>
<div class="t tah" style="left:1691.5px;top:387.8px;font-size:11px;letter-spacing:-0.06px;">Outfalls</div>
<div class="t tah" style="left:1691.5px;top:403.8px;font-size:11px;letter-spacing:-0.13px;">Dividers</div>
<div class="t tah" style="left:1691.5px;top:419.8px;font-size:11px;letter-spacing:-0.11px;">Storage Units</div>
<div class="t tah" style="left:1672.5px;top:435.8px;font-size:11px;letter-spacing:-0.23px;">Links</div>
<div class="t tah" style="left:1691.5px;top:451.8px;font-size:11px;letter-spacing:-0.17px;">Conduits</div>
<div class="t tah" style="left:1691.5px;top:467.8px;font-size:11px;letter-spacing:-0.36px;">Pumps</div>
<div class="t tah" style="left:1691.5px;top:483.8px;font-size:11px;letter-spacing:-0.15px;">Orifices</div>
<div class="t tah" style="left:1691.5px;top:499.8px;font-size:11px;letter-spacing:-0.17px;">Weirs</div>
<div class="t tah" style="left:1691.5px;top:515.8px;font-size:11px;letter-spacing:-0.05px;">Outlets</div>
<div class="t tah" style="left:1672.5px;top:531.8px;font-size:11px;letter-spacing:-0.14px;">Transects</div>
<div class="t tah" style="left:1672.5px;top:547.8px;font-size:11px;letter-spacing:-0.15px;">Controls</div>
<div class="t tah" style="left:1653.5px;top:563.8px;font-size:11px;letter-spacing:-0.05px;">Quality</div>
<div class="a" style="left:1629px;top:176px;width:267px;height:406.6px;overflow:hidden">
<svg style="left:-1px;top:-1px" width="267" height="420"><g transform="translate(-1628,-175)" fill="none" stroke="#7f7f7f" stroke-width="1" stroke-dasharray="1 1"><path d="M1642.5 185 V584"/><path d="M1661.5 238 V329.5"/><path d="M1661.5 350 V553.5"/><path d="M1680.5 366 V425.5"/><path d="M1680.5 446 V521.5"/><path d="M1643.0 185.5 H1651.0"/><path d="M1643.0 201.5 H1651.0"/><path d="M1643.0 217.5 H1651.0"/><path d="M1643.0 233.5 H1651.0"/><path d="M1662.0 249.5 H1670.0"/><path d="M1662.0 265.5 H1670.0"/><path d="M1662.0 281.5 H1670.0"/><path d="M1662.0 297.5 H1670.0"/><path d="M1662.0 313.5 H1670.0"/><path d="M1662.0 329.5 H1670.0"/><path d="M1643.0 345.5 H1651.0"/><path d="M1662.0 361.5 H1670.0"/><path d="M1681.0 377.5 H1689.0"/><path d="M1681.0 393.5 H1689.0"/><path d="M1681.0 409.5 H1689.0"/><path d="M1681.0 425.5 H1689.0"/><path d="M1662.0 441.5 H1670.0"/><path d="M1681.0 457.5 H1689.0"/><path d="M1681.0 473.5 H1689.0"/><path d="M1681.0 489.5 H1689.0"/><path d="M1681.0 505.5 H1689.0"/><path d="M1681.0 521.5 H1689.0"/><path d="M1662.0 537.5 H1670.0"/><path d="M1662.0 553.5 H1670.0"/><path d="M1643.0 569.5 H1651.0"/></g><g transform="translate(-1628,-175)"><rect x="1638.5" y="229.5" width="8" height="8" fill="#fff" stroke="#8f8f8f" stroke-width="1"/><path d="M1640.0 233.5 H1645.0" stroke="#3a4a8a" stroke-width="1"/><rect x="1638.5" y="341.5" width="8" height="8" fill="#fff" stroke="#8f8f8f" stroke-width="1"/><path d="M1640.0 345.5 H1645.0" stroke="#3a4a8a" stroke-width="1"/><rect x="1657.5" y="357.5" width="8" height="8" fill="#fff" stroke="#8f8f8f" stroke-width="1"/><path d="M1659.0 361.5 H1664.0" stroke="#3a4a8a" stroke-width="1"/><rect x="1657.5" y="437.5" width="8" height="8" fill="#fff" stroke="#8f8f8f" stroke-width="1"/><path d="M1659.0 441.5 H1664.0" stroke="#3a4a8a" stroke-width="1"/><rect x="1638.5" y="565.5" width="8" height="8" fill="#fff" stroke="#8f8f8f" stroke-width="1"/><path d="M1640.0 569.5 H1645.0" stroke="#3a4a8a" stroke-width="1"/><path d="M1642.5 567.0 V572.0" stroke="#3a4a8a" stroke-width="1"/><rect x="1638.5" y="581.5" width="8" height="8" fill="#fff" stroke="#8f8f8f" stroke-width="1"/><path d="M1640.0 585.5 H1645.0" stroke="#3a4a8a" stroke-width="1"/><path d="M1642.5 583.0 V588.0" stroke="#3a4a8a" stroke-width="1"/></g></svg>
<div class="t tah" style="left:24.5px;top:403.8px;font-size:11px">Curves</div>
</div>
<div class="a" style="left:1629px;top:585px;width:284px;height:30px;background:#f0f0f0"></div>
<div class="a" style="left:1629px;top:994px;width:284px;height:3px;background:#f0f0f0"></div>
<svg style="left:1633px;top:595px" width="13" height="13" viewBox="0 0 13 13"><path d="M6.5 .5 V12.5 M.5 6.5 H12.5" stroke="#c9c9c9" stroke-width="4"/><path d="M6.5 1 V12 M1 6.5 H12" stroke="#adadad" stroke-width="2.6"/></svg>
<svg style="left:1655px;top:594px" width="14" height="14" viewBox="0 0 14 14"><path d="M3.2 3.2 L10.8 10.8 M10.8 3.2 L3.2 10.8" stroke="#f6e0d8" stroke-width="5.5" stroke-linecap="round"/><path d="M3.6 3.6 L10.4 10.4 M10.4 3.6 L3.6 10.4" stroke="#7d3a36" stroke-width="2.4"/></svg>
<svg style="left:1677px;top:594px" width="17" height="15" viewBox="0 0 17 15"><path d="M.3 1.8 Q.3 .8 1.3 .8 H6.2 L7.6 2.2 V4 H.3Z" fill="#e9a23a"/><path d="M.3 3.2 H7 L8.6 .6 H14 Q15 .6 15 1.6 V12.2 H.3Z" fill="#f5d73c"/><path d="M.3 10.8 H15 V12.2 H.3Z" fill="#e8b93a"/><circle cx="12.3" cy="10.8" r="4" fill="#e63c3c"/><path d="M10.6 9.1 L14 12.5 M14 9.1 L10.6 12.5" stroke="#fff" stroke-width="1.5"/></svg>
<div class="a" style="left:1699px;top:591px;width:1.4px;height:21px;background:#4a4a4a"></div>
<svg style="left:1706px;top:593px" width="17" height="16" viewBox="0 0 17 16"><rect x=".8" y="5" width="10.5" height="10" rx="1" fill="#fff" stroke="#5a7a9a" stroke-width="1.2"/><path d="M2.5 9.5 H9.5 M2.5 12 H9.5" stroke="#b6d4ee" stroke-width="1.2"/><path d="M2.5 5.5 L5 1.5 L11 .5 L15.5 1.5 L14 5 L11 5.5 L8 8 L4.5 6Z" fill="#e9d6a8" stroke="#a08a5a" stroke-width=".6"/><path d="M14 1.5 L16 2 L15 5 L13.5 5Z" fill="#3a5a8a"/></svg>
<svg style="left:1729px;top:593px" width="17" height="16" viewBox="0 0 17 16"><rect x="5" y="4" width="10" height="9" fill="#fff" stroke="#7a9aba" stroke-width="1"/><rect x="3" y="5.5" width="10" height="9" fill="#fff" stroke="#7a9aba" stroke-width="1"/><rect x=".8" y="7" width="10.5" height="8.5" fill="#fff" stroke="#5a7a9a" stroke-width="1.2"/><path d="M1.5 8 H5 V15 H1.5Z" fill="#3aa0e8"/><path d="M5.5 10 H10.5 M5.5 12.5 H10.5 M2 10 H4.5 M2 12.5 H4.5" stroke="#cfe2f2" stroke-width="1.2"/><path d="M4.5 4.5 L7 1 L12 0 L16 1.5 L15.5 5 L12 5 L9.5 7 L6.5 6Z" fill="#e6c98a" stroke="#a08a5a" stroke-width=".6"/></svg>
<div class="a" style="left:1628px;top:614px;width:286.5px;height:381px;background:#fff;border:1px solid #70777f"></div>
<div class="a" style="left:1630px;top:642px;width:1282px;height:13px;background:#0078d7;width:282px"></div>
<div class="t tah" style="left:1632px;top:617.8px;font-size:11px;letter-spacing:-0.37px;">C-2</div>
<div class="t tah" style="left:1632px;top:630.8px;font-size:11px;letter-spacing:-0.37px;">C-3</div>
<div class="t tah" style="left:1632px;top:643.8px;font-size:11px;letter-spacing:-0.37px;color:#fff">C-1</div>
<div class="t tah" style="left:1632px;top:656.8px;font-size:11px;letter-spacing:-0.37px;">C-5</div>
<div class="t tah" style="left:1632px;top:669.8px;font-size:11px;letter-spacing:-0.37px;">C-4</div>
<div class="a" style="left:839px;top:259px;width:439px;height:611px;background:#6a76b5;border:1px solid #4a5596"></div>
<div class="a" style="left:840px;top:260px;width:437px;height:23px;background:linear-gradient(#959ecb,#8a94c4 25%,#6f7ab7 70%,#6470b0)"></div>
<div class="a" style="left:843px;top:283px;width:431px;height:583px;background:#fff"></div>
<div class="a" style="left:840px;top:260px;width:437px;height:1px;background:#c9d1e7"></div>
<div class="a" style="left:840px;top:261px;width:1px;height:608px;background:#8795c6"></div>
<svg style="left:847px;top:263.5px" width="12" height="15.5" viewBox="0 0 12 15.5"><path d="M6 .2 C8 4 11.8 7 11.8 10.2 A5.8 5.2 0 0 1 .2 10.2 C.2 7 4 4 6 .2Z" fill="#1c7ad0"/><path d="M4 3.5 L6 1 L8 3.5 L6.5 4.5Z" fill="#1f7a6a"/><path d="M6.3 2 L8 2.5 L7 4Z" fill="#fff"/><path d="M1 8.5 L4 5.5 L6 8 L8.5 5.8 L11 8.6 L8 10 L5.5 9.2 L2 10Z" fill="#f4f8fa"/><path d="M6.5 9.3 Q9 8.2 11.6 9.4 L11.4 10.6 Q9 9.8 6.5 10.4Z" fill="#2f9a3a"/><path d="M.4 9.4 Q2.5 8.8 4.5 9.8 L3 10.8 Q1.6 10.4 .4 10.6Z" fill="#3fa04a"/><path d="M4 9.5 L5.5 9.2 L7.5 13.5 L5.5 13.8Z" fill="#fff"/></svg>
<div class="t " style="left:865.5px;top:266.0px;font-size:12px;letter-spacing:-0.06px;color:#fff">Conduit: C-1</div>
<div class="a" style="left:1258px;top:264px;width:15px;height:15px;background:linear-gradient(#f1b9a0 0,#eb8f78 18%,#e8504c 28%,#e8504c);border-radius:2px;box-shadow:0 0 0 1px #5964a6"></div>
<svg style="left:1261px;top:267px" width="9" height="9" viewBox="0 0 9 9"><path d="M1 1 L8 8 M8 1 L1 8" stroke="#fff" stroke-width="2.3"/></svg>
<div class="a" style="left:856px;top:296px;width:405px;height:20px;background:#a9cde9"></div>
<div class="t " style="left:872px;top:300.5px;font-size:12px;font-weight:bold;color:#111;white-space:pre;letter-spacing:.55px">Property  &amp;  Value</div>
<div class="a" style="left:856px;top:319px;width:149px;height:21px;background:#c4e4f6"></div>
<div class="a" style="left:856px;top:340px;width:405px;height:1px;background:#ededed"></div>
<div class="a" style="left:856px;top:363px;width:405px;height:1px;background:#ededed"></div>
<div class="a" style="left:856px;top:385px;width:405px;height:1px;background:#ededed"></div>
<div class="a" style="left:856px;top:405px;width:405px;height:1px;background:#ededed"></div>
<div class="a" style="left:856px;top:423px;width:405px;height:1px;background:#ededed"></div>
<div class="a" style="left:856px;top:446px;width:405px;height:1px;background:#ededed"></div>
<div class="a" style="left:856px;top:464px;width:405px;height:1px;background:#ededed"></div>
<div class="a" style="left:856px;top:482px;width:405px;height:1px;background:#ededed"></div>
<div class="a" style="left:856px;top:500px;width:405px;height:1px;background:#ededed"></div>
<div class="a" style="left:856px;top:519px;width:405px;height:1px;background:#ededed"></div>
<div class="a" style="left:856px;top:537px;width:405px;height:1px;background:#ededed"></div>
<div class="a" style="left:856px;top:555px;width:405px;height:1px;background:#ededed"></div>
<div class="a" style="left:856px;top:574px;width:405px;height:1px;background:#ededed"></div>
<div class="a" style="left:856px;top:592px;width:405px;height:1px;background:#ededed"></div>
<div class="a" style="left:856px;top:610px;width:405px;height:1px;background:#ededed"></div>
<div class="a" style="left:856px;top:628px;width:405px;height:1px;background:#ededed"></div>
<div class="a" style="left:856px;top:647px;width:405px;height:1px;background:#ededed"></div>
<div class="a" style="left:856px;top:665px;width:405px;height:1px;background:#ededed"></div>
<div class="a" style="left:856px;top:683px;width:405px;height:1px;background:#ededed"></div>
<div class="a" style="left:856px;top:702px;width:405px;height:1px;background:#ededed"></div>
<div class="a" style="left:856px;top:722px;width:405px;height:1px;background:#ededed"></div>
<div class="a" style="left:856px;top:744px;width:405px;height:1px;background:#ededed"></div>
<div class="a" style="left:856px;top:762px;width:405px;height:1px;background:#ededed"></div>
<div class="a" style="left:1005px;top:319px;width:1px;height:444px;background:#ededed"></div>
<div class="t tah" style="left:873px;top:324.8px;font-size:11px;letter-spacing:-0.3px;">Name</div>
<div class="t tah" style="left:1012px;top:324.8px;font-size:11px;letter-spacing:-0.37px;">C-1</div>
<div class="t tah" style="left:873px;top:346.8px;font-size:11px;letter-spacing:0.07px;">Inlet Node</div>
<div class="t tah" style="left:1012px;top:346.8px;font-size:11px;letter-spacing:-0.23px;">J-1</div>
<div class="t tah" style="left:873px;top:369.8px;font-size:11px;letter-spacing:-0.05px;">Outlet Node</div>
<div class="t tah" style="left:1012px;top:369.8px;font-size:11px;letter-spacing:-0.19px;">O-1</div>
<div class="t tah" style="left:873px;top:390.8px;font-size:11px;letter-spacing:-0.09px;">Description</div>
<div class="t tah" style="left:873px;top:409.8px;font-size:11px;letter-spacing:0.18px;">Tag</div>
<div class="t tah" style="left:873px;top:429.8px;font-size:11px;letter-spacing:-0.08px;">Material</div>
<div class="t tah" style="left:1012px;top:429.8px;font-size:11px;letter-spacing:-1.0px;">PVC</div>
<div class="t tah" style="left:873px;top:450.8px;font-size:11px;letter-spacing:-0.38px;">Shape</div>
<div class="t tah" style="left:1010px;top:450.8px;font-size:11px;letter-spacing:-0.74px;color:#4a4a4a">CIRCULAR</div>
<div class="t tah" style="left:873px;top:468.8px;font-size:11px;letter-spacing:-0.06px;">Max. Depth</div>
<div class="t tah" style="right:661px;top:468.8px;font-size:11px;letter-spacing:0.02px;">1.5</div>
<div class="t tah" style="left:873px;top:486.8px;font-size:11px;letter-spacing:-0.12px;">Calculated Length</div>
<div class="t tah" style="left:1010px;top:486.8px;font-size:11px;letter-spacing:-0.09px;color:#9a9a9a">154.46956401855869</div>
<div class="t tah" style="left:873px;top:504.8px;font-size:11px;letter-spacing:-0.08px;">User Defined Length</div>
<div class="t tah" style="right:661px;top:504.8px;font-size:11px;letter-spacing:-0.08px;">154.469563992</div>
<div class="t tah" style="left:873px;top:523.8px;font-size:11px;letter-spacing:-0.12px;">Use User Defined Length</div>
<div class="t tah" style="left:873px;top:541.8px;font-size:11px;letter-spacing:-0.31px;">Roughness</div>
<div class="t tah" style="right:661px;top:541.8px;font-size:11px;letter-spacing:-0.03px;">0.012</div>
<div class="t tah" style="left:873px;top:559.8px;font-size:11px;letter-spacing:0.15px;">Inlet Offset</div>
<div class="t tah" style="right:661px;top:559.8px;font-size:11px;letter-spacing:-0.12px;">0</div>
<div class="t tah" style="left:873px;top:578.8px;font-size:11px;letter-spacing:0.05px;">Outlet Offset</div>
<div class="t tah" style="right:661px;top:578.8px;font-size:11px;letter-spacing:-0.12px;">0</div>
<div class="t tah" style="left:873px;top:596.8px;font-size:11px;letter-spacing:0.09px;">Initial Flow</div>
<div class="t tah" style="right:661px;top:596.8px;font-size:11px;letter-spacing:-0.12px;">0</div>
<div class="t tah" style="left:873px;top:614.8px;font-size:11px;letter-spacing:-0.11px;">Maximum Flow</div>
<div class="t tah" style="right:661px;top:614.8px;font-size:11px;letter-spacing:-0.12px;">0</div>
<div class="t tah" style="left:873px;top:632.8px;font-size:11px;letter-spacing:-0.11px;">Entry Loss Coeff.</div>
<div class="t tah" style="right:661px;top:632.8px;font-size:11px;letter-spacing:-0.12px;">0</div>
<div class="t tah" style="left:873px;top:651.8px;font-size:11px;letter-spacing:-0.14px;">Exit Loss Coeff.</div>
<div class="t tah" style="right:661px;top:651.8px;font-size:11px;letter-spacing:-0.12px;">0</div>
<div class="t tah" style="left:873px;top:669.8px;font-size:11px;letter-spacing:-0.12px;">Avg. Loss Coeff.</div>
<div class="t tah" style="right:661px;top:669.8px;font-size:11px;letter-spacing:-0.12px;">0</div>
<div class="t tah" style="left:873px;top:687.8px;font-size:11px;letter-spacing:-0.29px;">Seepage Loss Rate</div>
<div class="t tah" style="right:661px;top:687.8px;font-size:11px;letter-spacing:-0.12px;">0</div>
<div class="t tah" style="left:873px;top:707.8px;font-size:11px;letter-spacing:-0.24px;">Flap Gate</div>
<div class="t tah" style="left:873px;top:728.8px;font-size:11px;letter-spacing:-0.18px;">Culvert Code</div>
<div class="t tah" style="left:873px;top:748.8px;font-size:11px;letter-spacing:-0.14px;">Active</div>
<div class="a" style="left:1006px;top:386px;width:255px;height:19px;background:#fff;border:1px solid #b8b8b8"></div>
<div class="a" style="left:1241px;top:447px;width:20px;height:17px;background:#e4e4e4;border:1px solid #8e8e8e"></div>
<div class="t tah" style="left:1245px;top:449.5px;font-size:11px;font-weight:bold;letter-spacing:0">...</div>
<div class="a" style="left:1012px;top:522px;width:14px;height:13px;background:#fff;border:1px solid #707070"></div>
<svg style="left:1014.5px;top:524.5px" width="9" height="8" viewBox="0 0 9 8"><path d="M.8 4 L3.4 6.8 L8.4 .8" fill="none" stroke="#111" stroke-width="1.5"/></svg>
<div class="a" style="left:1006px;top:703px;width:255px;height:19px;background:linear-gradient(#f2f2f2,#e2e2e2);border:1px solid #9a9a9a"></div>
<div class="t tah" style="left:1012px;top:707.8px;font-size:11px;letter-spacing:-0.69px;">NO</div>
<svg style="left:1247px;top:709px" width="7" height="5" viewBox="0 0 7 5"><path d="M.5 .5 L3.5 3.5 L6.5 .5" fill="none" stroke="#444" stroke-width="1.1"/></svg>
<div class="a" style="left:1006px;top:747px;width:14px;height:14px;background:#f0f0f0;border:1px solid #c4c4c4;border-radius:2px"></div>
<div class="a" style="left:856px;top:771.5px;width:405px;height:40.5px;background:#a9cde9;border-top:4px solid #9cafc0"></div>
<div class="t tah" style="left:858px;top:779.8px;font-size:11px;font-weight:bold;letter-spacing:.5px">Name</div>
<div class="t tah" style="left:861px;top:795.8px;font-size:11px;letter-spacing:-0.06px;">User-assigned name of conduit</div>
<div class="a" style="left:1101px;top:828px;width:75px;height:25px;background:linear-gradient(#f6fbff 0,#e8f3fc 35%,#b9d7f2 45%,#a9cdee 75%,#e3f0fb 100%);border:1px solid #6f95c2;border-radius:3px;box-shadow:inset 0 0 0 1px #fff"></div>
<div class="t tah c" style="left:1138.5px;top:835.5px;font-size:11px;letter-spacing:-0.83px;">OK</div>
<div class="a" style="left:1186px;top:828px;width:75px;height:25px;background:linear-gradient(#f6fbff 0,#e8f3fc 35%,#b9d7f2 45%,#a9cdee 75%,#e3f0fb 100%);border:1px solid #6f95c2;border-radius:3px;box-shadow:inset 0 0 0 1px #fff"></div>
<div class="t tah c" style="left:1223.5px;top:835.5px;font-size:11px;letter-spacing:-0.39px;">Cancel</div>
</body></html>
